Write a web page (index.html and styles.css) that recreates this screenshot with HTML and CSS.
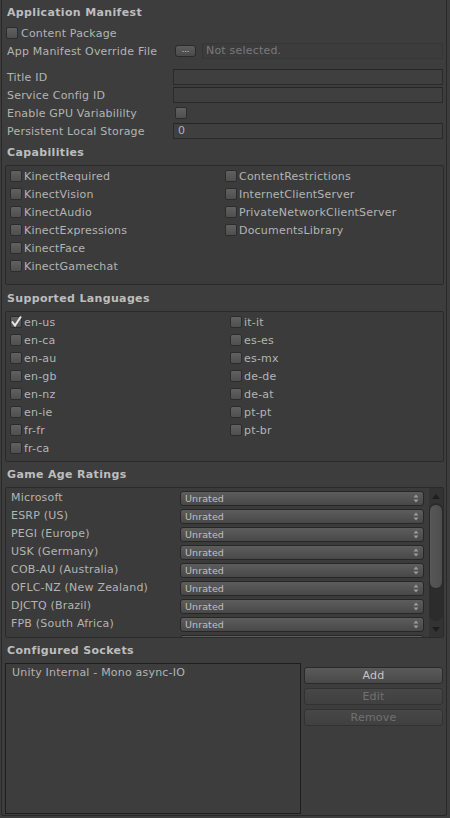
FILE: index.html
```html
<!DOCTYPE html>
<html>
<head>
<meta charset="utf-8">
<link rel="stylesheet" href="styles.css">
</head>
<body>
<div class="panel">
  <div class="heading h-first">Application Manifest</div>
  <div class="row toggle-row"><span class="cb"></span><span>Content Package</span></div>
  <div class="row"><span class="lbl">App Manifest Override File</span><span class="dots">...</span><span class="field disabled">Not selected.</span></div>
  <div class="row gap8"><span class="lbl">Title ID</span><span class="field"></span></div>
  <div class="row"><span class="lbl">Service Config ID</span><span class="field"></span></div>
  <div class="row"><span class="lbl">Enable GPU Variabililty</span><span class="cb cb-field"></span></div>
  <div class="row"><span class="lbl">Persistent Local Storage</span><span class="field">0</span></div>

  <div class="heading mt4">Capabilities</div>
  <div class="box grid caps">
    <div class="item"><span class="cb"></span>KinectRequired</div>
    <div class="item"><span class="cb"></span>ContentRestrictions</div>
    <div class="item"><span class="cb"></span>KinectVision</div>
    <div class="item"><span class="cb"></span>InternetClientServer</div>
    <div class="item"><span class="cb"></span>KinectAudio</div>
    <div class="item"><span class="cb"></span>PrivateNetworkClientServer</div>
    <div class="item"><span class="cb"></span>KinectExpressions</div>
    <div class="item"><span class="cb"></span>DocumentsLibrary</div>
    <div class="item"><span class="cb"></span>KinectFace</div>
    <div class="item"></div>
    <div class="item"><span class="cb"></span>KinectGamechat</div>
  </div>

  <div class="heading mt5">Supported Languages</div>
  <div class="box grid langs">
    <div class="item"><span class="cb checked"><svg width="12" height="12" viewBox="0 0 12 12"><polyline points="2,5.5 5,9.5 11,0.5" fill="none" stroke="#e8e8e8" stroke-width="2"/></svg></span>en-us</div>
    <div class="item"><span class="cb"></span>it-it</div>
    <div class="item"><span class="cb"></span>en-ca</div>
    <div class="item"><span class="cb"></span>es-es</div>
    <div class="item"><span class="cb"></span>en-au</div>
    <div class="item"><span class="cb"></span>es-mx</div>
    <div class="item"><span class="cb"></span>en-gb</div>
    <div class="item"><span class="cb"></span>de-de</div>
    <div class="item"><span class="cb"></span>en-nz</div>
    <div class="item"><span class="cb"></span>de-at</div>
    <div class="item"><span class="cb"></span>en-ie</div>
    <div class="item"><span class="cb"></span>pt-pt</div>
    <div class="item"><span class="cb"></span>fr-fr</div>
    <div class="item"><span class="cb"></span>pt-br</div>
    <div class="item"><span class="cb"></span>fr-ca</div>
  </div>

  <div class="heading mt4">Game Age Ratings</div>
  <div class="box ratings">
    <div class="rlist">
      <div class="rrow"><span class="rlbl">Microsoft</span><span class="dd">Unrated<svg class="ddarrow" width="6" height="9" viewBox="0 0 6 9"><polygon points="0.5,3.5 3,0.5 5.5,3.5" fill="#9c9c9c"/><polygon points="0.5,5.5 3,8.5 5.5,5.5" fill="#9c9c9c"/></svg></span></div>
      <div class="rrow"><span class="rlbl">ESRP (US)</span><span class="dd">Unrated<svg class="ddarrow" width="6" height="9" viewBox="0 0 6 9"><polygon points="0.5,3.5 3,0.5 5.5,3.5" fill="#9c9c9c"/><polygon points="0.5,5.5 3,8.5 5.5,5.5" fill="#9c9c9c"/></svg></span></div>
      <div class="rrow"><span class="rlbl">PEGI (Europe)</span><span class="dd">Unrated<svg class="ddarrow" width="6" height="9" viewBox="0 0 6 9"><polygon points="0.5,3.5 3,0.5 5.5,3.5" fill="#9c9c9c"/><polygon points="0.5,5.5 3,8.5 5.5,5.5" fill="#9c9c9c"/></svg></span></div>
      <div class="rrow"><span class="rlbl">USK (Germany)</span><span class="dd">Unrated<svg class="ddarrow" width="6" height="9" viewBox="0 0 6 9"><polygon points="0.5,3.5 3,0.5 5.5,3.5" fill="#9c9c9c"/><polygon points="0.5,5.5 3,8.5 5.5,5.5" fill="#9c9c9c"/></svg></span></div>
      <div class="rrow"><span class="rlbl">COB-AU (Australia)</span><span class="dd">Unrated<svg class="ddarrow" width="6" height="9" viewBox="0 0 6 9"><polygon points="0.5,3.5 3,0.5 5.5,3.5" fill="#9c9c9c"/><polygon points="0.5,5.5 3,8.5 5.5,5.5" fill="#9c9c9c"/></svg></span></div>
      <div class="rrow"><span class="rlbl">OFLC-NZ (New Zealand)</span><span class="dd">Unrated<svg class="ddarrow" width="6" height="9" viewBox="0 0 6 9"><polygon points="0.5,3.5 3,0.5 5.5,3.5" fill="#9c9c9c"/><polygon points="0.5,5.5 3,8.5 5.5,5.5" fill="#9c9c9c"/></svg></span></div>
      <div class="rrow"><span class="rlbl">DJCTQ (Brazil)</span><span class="dd">Unrated<svg class="ddarrow" width="6" height="9" viewBox="0 0 6 9"><polygon points="0.5,3.5 3,0.5 5.5,3.5" fill="#9c9c9c"/><polygon points="0.5,5.5 3,8.5 5.5,5.5" fill="#9c9c9c"/></svg></span></div>
      <div class="rrow"><span class="rlbl">FPB (South Africa)</span><span class="dd">Unrated<svg class="ddarrow" width="6" height="9" viewBox="0 0 6 9"><polygon points="0.5,3.5 3,0.5 5.5,3.5" fill="#9c9c9c"/><polygon points="0.5,5.5 3,8.5 5.5,5.5" fill="#9c9c9c"/></svg></span></div>
      <div class="rrow"><span class="rlbl"></span><span class="dd"></span></div>
    </div>
    <div class="sb">
      <div class="sb-arrow"><svg width="8" height="5" viewBox="0 0 8 5"><polygon points="0,5 4,0 8,5" fill="#1e1e1e"/></svg></div>
      <div class="sb-track"><div class="sb-thumb"></div></div>
      <div class="sb-arrow sb-down"><svg width="8" height="5" viewBox="0 0 8 5"><polygon points="0,0 4,5 8,0" fill="#1e1e1e"/></svg></div>
    </div>
  </div>

  <div class="heading mt4">Configured Sockets</div>
  <div class="sockets">
    <div class="slist"><div class="sitem">Unity Internal - Mono async-IO</div></div>
    <div class="sbtns">
      <div class="btn">Add</div>
      <div class="btn off">Edit</div>
      <div class="btn off">Remove</div>
    </div>
  </div>
</div>
</body>
</html>
```
FILE: styles.css
```css
* { box-sizing: border-box; }
html, body { margin: 0; padding: 0; }
body {
  background: #3d3d3d;
  width: 450px;
  height: 818px;
  overflow: hidden;
  font-family: "DejaVu Sans", Verdana, sans-serif;
  font-size: 11px;
  letter-spacing: 0.2px;
  color: #b4b4b4;
}
.panel {
  margin-left: 1px;
  width: 446px;
  height: 816px;
  border: 1px solid #292929;
  border-top: none;
  border-radius: 0 0 3px 3px;
  padding: 4px 2px 1px 3px;
}
.heading {
  height: 18px;
  line-height: 18px;
  padding-left: 2px;
  font-weight: bold;
  color: #bdbdbd;
  letter-spacing: 0.35px;
  margin-bottom: 3px;
  white-space: nowrap;
}
.h-first { margin-bottom: 2px; }
.mt4 { margin-top: 4px; }
.mt5 { margin-top: 5px; }
.gap8 { margin-top: 8px; }

.row {
  display: flex;
  align-items: center;
  height: 18px;
  padding-left: 2px;
  padding-right: 1px;
  white-space: nowrap;
}
.toggle-row { padding-left: 1px; }
.toggle-row .cb { margin-right: 3px; }
.lbl { width: 166px; flex: none; }

.cb {
  flex: none;
  display: inline-flex;
  width: 12px;
  height: 12px;
  border: 1px solid #2c2c2c;
  border-radius: 2px;
  background: linear-gradient(#616161, #4f4f4f);
  margin-right: 2px;
}
.cb svg { display: block; margin: -1px 0 0 -1px; overflow: visible; }
.cb-field { margin-left: 2px; }

.field {
  flex: 1;
  height: 16px;
  border: 1px solid #2a2a2a;
  border-top-color: #252525;
  background: #3f3f3f;
  line-height: 14px;
  padding-left: 4px;
  color: #b4b4b4;
}
.field.disabled {
  margin-left: 6px;
  border-color: #363636;
  background: #3c3c3c;
  color: #7a7a7a;
  padding-left: 3px;
}
.dots {
  flex: none;
  margin-left: 2px;
  width: 21px;
  height: 12px;
  border: 1px solid #2a2a2a;
  border-radius: 3px;
  background: linear-gradient(#5c5c5c, #4a4a4a);
  font-size: 8px;
  line-height: 8px;
  text-align: center;
  color: #d0d0d0;
  letter-spacing: 0;
}

.box {
  border: 1px solid #2a2a2a;
  border-radius: 2px;
  background: #3b3b3b;
}
.grid {
  display: grid;
  grid-auto-rows: 18px;
}
.caps {
  height: 120px;
  grid-template-columns: 215px 1fr;
  padding: 1px 0 9px 4px;
}
.langs {
  height: 151px;
  grid-template-columns: 220px 1fr;
  padding: 1px 0 4px 4px;
}
.item {
  display: flex;
  align-items: center;
  white-space: nowrap;
}

.ratings {
  height: 151px;
  display: flex;
  overflow: hidden;
}
.rlist {
  flex: 1;
  padding-top: 1px;
  overflow: hidden;
}
.rrow {
  height: 18px;
  display: flex;
  padding: 0 5px;
  white-space: nowrap;
}
.rlbl {
  width: 169px;
  flex: none;
  line-height: 18px;
}
.dd {
  flex: 1;
  height: 15px;
  margin-top: 2px;
  border: 1px solid #272727;
  border-radius: 3px;
  background: linear-gradient(#5d5d5d, #484848);
  display: flex;
  align-items: center;
  padding: 0 4px;
  font-size: 9.5px;
  color: #c0c0c0;
  letter-spacing: 0.1px;
}
.ddarrow { margin-left: auto; display: block; }

.sb {
  width: 14px;
  flex: none;
  background: #333333;
  display: flex;
  flex-direction: column;
}
.sb-arrow {
  height: 15px;
  display: flex;
  justify-content: center;
  align-items: center;
  padding-top: 2px;
}
.sb-down { height: 16px; padding-top: 0; }
.sb-arrow svg { display: block; }
.sb-track {
  height: 118px;
  border-radius: 7px;
  background: #2c2c2c;
  padding-top: 1px;
}
.sb-thumb {
  height: 85px;
  border-radius: 7px;
  border: 1px solid #2a2a2a;
  background: linear-gradient(90deg, #575757, #4e4e4e);
}

.sockets {
  height: 151px;
  display: flex;
}
.slist {
  width: 296px;
  flex: none;
  border: 1px solid #1e1e1e;
  padding: 1px 6px;
}
.sitem {
  line-height: 15px;
  white-space: nowrap;
}
.sbtns {
  flex: 1;
  margin-left: 3px;
  margin-right: 1px;
  padding-top: 4px;
  display: flex;
  flex-direction: column;
  gap: 4px;
}
.btn {
  height: 17px;
  border: 1px solid #2a2a2a;
  border-radius: 3px;
  background: linear-gradient(#5a5a5a, #494949);
  text-align: center;
  line-height: 15px;
  color: #c6c6c6;
}
.btn.off {
  border-color: #323232;
  background: linear-gradient(#474747, #404040);
  color: #717171;
}
```
